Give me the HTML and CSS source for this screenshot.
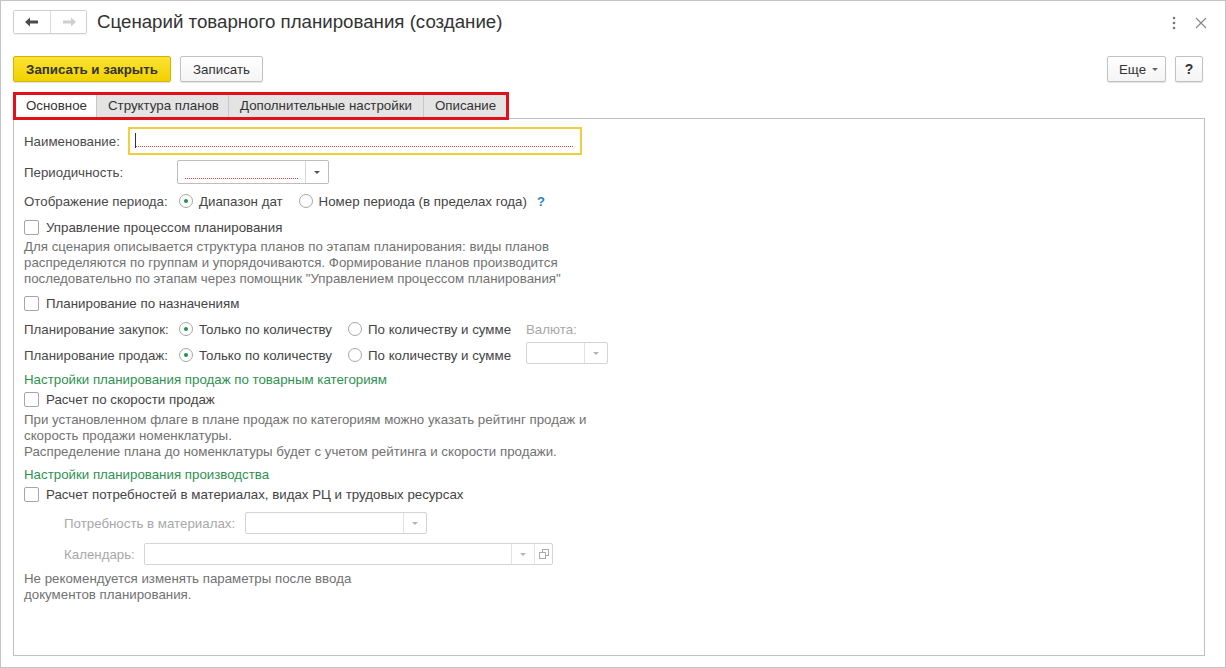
FILE: index.html
```html
<!DOCTYPE html>
<html lang="ru">
<head>
<meta charset="utf-8">
<title>Сценарий товарного планирования (создание)</title>
<link rel="stylesheet" href="styles.css">
</head>
<body>
<div class="window">
  <div class="header">
    <div class="nav">
      <button class="nav-btn">
        <svg width="14" height="10" viewBox="0 0 14 10"><path d="M0 5 L5 0.5 L5 3.5 L13 3.5 L13 6.5 L5 6.5 L5 9.5 Z" fill="#4a4a4a"/></svg>
      </button>
      <button class="nav-btn">
        <svg width="14" height="10" viewBox="0 0 14 10"><path d="M14 5 L9 0.5 L9 3.5 L1 3.5 L1 6.5 L9 6.5 L9 9.5 Z" fill="#cfcfcf"/></svg>
      </button>
    </div>
    <div class="title">Сценарий товарного планирования (создание)</div>
    <div class="win-tools">
      <svg class="kebab" width="4" height="14" viewBox="0 0 4 14"><circle cx="2" cy="2" r="1.3" fill="#777"/><circle cx="2" cy="7" r="1.3" fill="#777"/><circle cx="2" cy="12" r="1.3" fill="#777"/></svg>
      <svg class="close" width="12" height="12" viewBox="0 0 12 12"><path d="M1 1 L11 11 M11 1 L1 11" stroke="#888" stroke-width="1.2"/></svg>
    </div>
  </div>

  <div class="toolbar">
    <button class="btn btn-primary">Записать и закрыть</button>
    <button class="btn btn-save">Записать</button>
    <div class="toolbar-right">
      <button class="btn btn-more">Еще <span class="caret"></span></button>
      <button class="btn btn-help">?</button>
    </div>
  </div>

  <div class="tabs">
    <div class="tab active">Основное</div>
    <div class="tab t2">Структура планов</div>
    <div class="tab t3">Дополнительные настройки</div>
    <div class="tab last">Описание</div>
  </div>

  <div class="panel">
    <div class="row r-name">
      <span class="label">Наименование:</span>
      <div class="input focused"><span class="cursor"></span><span class="required"></span></div>
    </div>

    <div class="row r-period">
      <span class="label lw">Периодичность:</span>
      <div class="select s-period"><div class="select-field"><span class="required"></span></div><div class="select-btn"><span class="tri"></span></div></div>
    </div>

    <div class="row r-display">
      <span class="label lw">Отображение периода:</span>
      <span class="radio on"></span><span class="rtext">Диапазон дат</span>
      <span class="radio gap15"></span><span class="rtext">Номер периода (в пределах года)</span>
      <span class="help">?</span>
    </div>

    <div class="row r-cb1">
      <span class="checkbox"></span><span class="cbtext">Управление процессом планирования</span>
    </div>
    <div class="desc d1">Для сценария описывается структура планов по этапам планирования: виды планов<br>распределяются по группам и упорядочиваются. Формирование планов производится<br>последовательно по этапам через помощник "Управлением процессом планирования"</div>

    <div class="row r-cb2">
      <span class="checkbox"></span><span class="cbtext">Планирование по назначениям</span>
    </div>

    <div class="row r-buy">
      <span class="label lw">Планирование закупок:</span>
      <span class="radio on"></span><span class="rtext rt1">Только по количеству</span>
      <span class="radio"></span><span class="rtext rt2">По количеству и сумме</span>
      <span class="label disabled cur">Валюта:</span>
    </div>

    <div class="row r-sell">
      <span class="label lw">Планирование продаж:</span>
      <span class="radio on"></span><span class="rtext rt1">Только по количеству</span>
      <span class="radio"></span><span class="rtext rt2">По количеству и сумме</span>
      <div class="select s-cur disabled-select"><div class="select-field"></div><div class="select-btn"><span class="tri light"></span></div></div>
    </div>

    <div class="group-title g1">Настройки планирования продаж по товарным категориям</div>
    <div class="row r-cb3">
      <span class="checkbox"></span><span class="cbtext">Расчет по скорости продаж</span>
    </div>
    <div class="desc d2">При установленном флаге в плане продаж по категориям можно указать рейтинг продаж и<br>скорость продажи номенклатуры.<br>Распределение плана до номенклатуры будет с учетом рейтинга и скорости продажи.</div>

    <div class="group-title g2">Настройки планирования производства</div>
    <div class="row r-cb4">
      <span class="checkbox"></span><span class="cbtext">Расчет потребностей в материалах, видах РЦ и трудовых ресурсах</span>
    </div>

    <div class="row r-mat">
      <span class="label disabled">Потребность в материалах:</span>
      <div class="select s-mat disabled-select"><div class="select-field"></div><div class="select-btn"><span class="tri light"></span></div></div>
    </div>

    <div class="row r-cal">
      <span class="label disabled">Календарь:</span>
      <div class="select s-cal disabled-select"><div class="select-field"></div><div class="select-btn"><span class="tri light"></span></div><div class="select-btn open-btn">
        <svg width="10" height="10" viewBox="0 0 10 10"><rect x="3.5" y="0.5" width="6" height="6" fill="none" stroke="#aaa"/><rect x="0.5" y="3.5" width="6" height="6" fill="#fff" stroke="#aaa"/></svg>
      </div></div>
    </div>

    <div class="desc d3">Не рекомендуется изменять параметры после ввода<br>документов планирования.</div>
  </div>
</div>
</body>
</html>
```

FILE: styles.css
```css
* { box-sizing: border-box; }
html, body { margin: 0; padding: 0; background: #fff; }
body {
  font-family: "Liberation Sans", Arial, sans-serif;
  font-size: 13.3px;
  color: #333;
}
button { font-family: inherit; }

.window {
  width: 1226px;
  height: 668px;
  border: 1px solid #c4c4c4;
  padding: 0 20px 11px 12px;
  display: flex;
  flex-direction: column;
}

/* header */
.header {
  height: 45px;
  display: flex;
  align-items: flex-start;
  padding-top: 9px;
}
.nav {
  display: flex;
  height: 24px;
  border: 1px solid #cfcfcf;
  border-radius: 2px;
  box-shadow: 0 1px 1px rgba(0,0,0,0.06);
}
.nav-btn {
  width: 36px;
  height: 22px;
  border: 0;
  background: #fff;
  padding: 0;
  display: flex;
  align-items: center;
  justify-content: center;
}
.nav-btn + .nav-btn { border-left: 1px solid #dcdcdc; }
.title {
  margin-left: 10px;
  font-size: 18.7px;
  line-height: 24px;
  color: #333;
}
.win-tools {
  margin-left: auto;
  display: flex;
  align-items: center;
  height: 26px;
  margin-right: -2px;
}
.kebab { margin-right: 19px; }

/* toolbar */
.toolbar {
  display: flex;
  align-items: center;
  margin-top: 10px;
  padding-right: 2px;
}
.btn {
  height: 26px;
  padding: 0 12px;
  border: 1px solid #c2c2c2;
  border-radius: 2px;
  background: linear-gradient(#ffffff, #f4f4f4);
  box-shadow: 0 1px 1px rgba(0,0,0,0.12);
  font-size: 13.3px;
  color: #333;
}
.btn + .btn { margin-left: 9px; }
.btn-primary {
  width: 158px;
  padding: 0;
  background: linear-gradient(#fbe233, #f1d200);
  border-color: #d4b400;
  font-weight: bold;
  color: #333;
}
.btn-save { width: 83px; padding: 0; }
.toolbar-right { margin-left: auto; display: flex; }
.btn-more { width: 59px; padding: 0 0 0 4px; display: flex; align-items: center; justify-content: center; }
.caret {
  display: inline-block;
  margin-left: 6px;
  border-left: 3px solid transparent;
  border-right: 3px solid transparent;
  border-top: 3px solid #666;
}
.btn-help { width: 28px; padding: 0; font-weight: bold; font-size: 14px; }

/* tabs */
.tabs {
  margin-top: 10px;
  width: 496px;
  height: 28px;
  border: 3px solid #e2101a;
  display: flex;
  position: relative;
  z-index: 1;
  background: #e6e6e6;
}
.tab {
  height: 22px;
  line-height: 22px;
  padding: 0 0 0 11px;
  background: #e4e4e4;
  border-right: 1px solid #c9c9c9;
  color: #333;
  white-space: nowrap;
  overflow: hidden;
}
.tab.active { background: #fff; width: 81px; padding: 0 0 0 10px; }
.t2 { width: 132px; }
.t3 { width: 195px; }
.tab.last { border-right: 0; flex: 1; }

/* panel */
.panel {
  flex: 1;
  margin-top: -2px;
  border: 1px solid #c0c0c0;
  padding: 8px 0 0 10px;
}
.row {
  display: flex;
  align-items: center;
  height: 22px;
  white-space: nowrap;
}
.label { color: #4a4a4a; }
.lw { width: 155px; flex: none; }
.label.disabled { color: #a8a8a8; }

.r-name { height: 28px; }
.r-name .label { width: 104px; flex: none; }
.input {
  width: 454px;
  height: 28px;
  border: 2px solid #f0cf3c;
  position: relative;
  background: #fff;
}
.cursor {
  position: absolute;
  left: 5px;
  top: 4px;
  width: 1px;
  height: 15px;
  background: #333;
}
.required {
  position: absolute;
  height: 1px;
  background-image: linear-gradient(to right, #e04848 50%, transparent 50%);
  background-size: 2px 1px;
}
.input .required {
  left: 6px;
  right: 6px;
  bottom: 6px;
}

.r-period { height: 24px; margin-top: 5px; }
.select {
  display: flex;
  height: 24px;
  border: 1px solid #bdbdbd;
  border-radius: 2px;
  background: #fff;
}
.select-field { flex: 1; position: relative; }
.select-btn {
  width: 23px;
  border-left: 1px solid #d6d6d6;
  display: flex;
  align-items: center;
  justify-content: center;
}
.tri {
  border-left: 3px solid transparent;
  border-right: 3px solid transparent;
  border-top: 3px solid #555;
}
.tri.light { border-top-color: #b3b3b3; }
.s-period { width: 152px; margin-left: -2px; }
.s-period .required {
  left: 7px;
  right: 7px;
  bottom: 4px;
}
.disabled-select { border-color: #d4d4d4; height: 22px; }
.disabled-select .select-btn { border-left-color: #e2e2e2; }

.r-display { margin-top: 6px; }
.radio {
  width: 14px;
  height: 14px;
  border: 1px solid #a6a6a6;
  border-radius: 50%;
  flex: none;
  display: flex;
  align-items: center;
  justify-content: center;
  background: #fff;
}
.radio.on::after {
  content: "";
  width: 4px;
  height: 4px;
  border-radius: 50%;
  background: #1c9448;
}
.rtext { margin-left: 6px; color: #444; }
.gap15 { margin-left: 16px; }
.help { margin-left: 10px; color: #2a7fc1; font-weight: bold; font-size: 13px; }

.checkbox {
  width: 15px;
  height: 15px;
  border: 1px solid #a6a6a6;
  border-radius: 2px;
  flex: none;
  background: #fff;
}
.cbtext { margin-left: 7px; color: #444; }
.r-cb1 { margin-top: 4px; }

.desc {
  color: #727272;
  line-height: 16px;
  white-space: nowrap;
}
.d1 { margin-top: 1px; }
.r-cb2 { margin-top: 5px; }
.r-buy { margin-top: 4px; }
.r-sell { margin-top: 4px; }
.rt1 { width: 149px; flex: none; }
.rt2 { width: 158px; flex: none; }
.s-cur { width: 82px; margin-top: -4px; }

.group-title {
  color: #2f9150;
  height: 18px;
  line-height: 18px;
  white-space: nowrap;
}
.g1 { margin-top: 5px; }
.r-cb3 { height: 20px; }
.d2 { margin-top: 3px; }
.g2 { margin-top: 6px; }
.r-cb4 { height: 20px; }

.r-mat { margin-top: 8px; padding-left: 40px; }
.r-mat .label { width: 181px; flex: none; }
.s-mat { width: 182px; }

.r-cal { margin-top: 9px; padding-left: 40px; }
.r-cal .label { width: 80px; flex: none; }
.s-cal { width: 409px; }
.open-btn { width: 18px; }

.d3 { margin-top: 6px; }
```
